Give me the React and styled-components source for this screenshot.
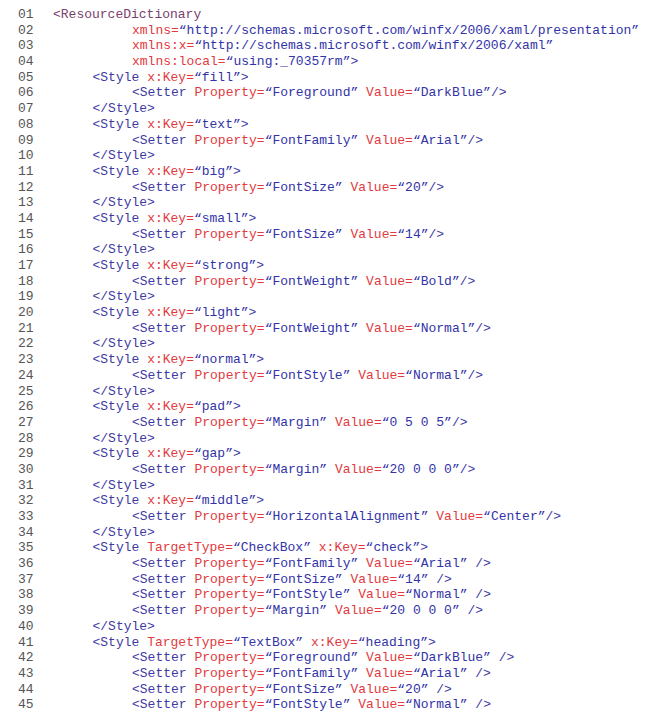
import React from "react";
import styled, { createGlobalStyle } from "styled-components";

const GlobalStyle = createGlobalStyle`
  html, body {
    margin: 0;
    padding: 0;
    background: #fff;
  }
`;

// [indent level, source text]
const lines = [
  [0, "<ResourceDictionary"],
  [2, "xmlns=“http://schemas.microsoft.com/winfx/2006/xaml/presentation”"],
  [2, "xmlns:x=“http://schemas.microsoft.com/winfx/2006/xaml”"],
  [2, "xmlns:local=“using:_70357rm”>"],
  [1, "<Style x:Key=“fill”>"],
  [2, "<Setter Property=“Foreground” Value=“DarkBlue”/>"],
  [1, "</Style>"],
  [1, "<Style x:Key=“text”>"],
  [2, "<Setter Property=“FontFamily” Value=“Arial”/>"],
  [1, "</Style>"],
  [1, "<Style x:Key=“big”>"],
  [2, "<Setter Property=“FontSize” Value=“20”/>"],
  [1, "</Style>"],
  [1, "<Style x:Key=“small”>"],
  [2, "<Setter Property=“FontSize” Value=“14”/>"],
  [1, "</Style>"],
  [1, "<Style x:Key=“strong”>"],
  [2, "<Setter Property=“FontWeight” Value=“Bold”/>"],
  [1, "</Style>"],
  [1, "<Style x:Key=“light”>"],
  [2, "<Setter Property=“FontWeight” Value=“Normal”/>"],
  [1, "</Style>"],
  [1, "<Style x:Key=“normal”>"],
  [2, "<Setter Property=“FontStyle” Value=“Normal”/>"],
  [1, "</Style>"],
  [1, "<Style x:Key=“pad”>"],
  [2, "<Setter Property=“Margin” Value=“0 5 0 5”/>"],
  [1, "</Style>"],
  [1, "<Style x:Key=“gap”>"],
  [2, "<Setter Property=“Margin” Value=“20 0 0 0”/>"],
  [1, "</Style>"],
  [1, "<Style x:Key=“middle”>"],
  [2, "<Setter Property=“HorizontalAlignment” Value=“Center”/>"],
  [1, "</Style>"],
  [1, "<Style TargetType=“CheckBox” x:Key=“check”>"],
  [2, "<Setter Property=“FontFamily” Value=“Arial” />"],
  [2, "<Setter Property=“FontSize” Value=“14” />"],
  [2, "<Setter Property=“FontStyle” Value=“Normal” />"],
  [2, "<Setter Property=“Margin” Value=“20 0 0 0” />"],
  [1, "</Style>"],
  [1, "<Style TargetType=“TextBox” x:Key=“heading”>"],
  [2, "<Setter Property=“Foreground” Value=“DarkBlue” />"],
  [2, "<Setter Property=“FontFamily” Value=“Arial” />"],
  [2, "<Setter Property=“FontSize” Value=“20” />"],
  [2, "<Setter Property=“FontStyle” Value=“Normal” />"],
];

const tokenRe = /(<\/?ResourceDictionary)|(<\/?[A-Za-z]+)|([A-Za-z:]+=)|(“[^”]*”)|(\/?>)|(\s+)/g;

function tokenize(src) {
  const out = [];
  let m;
  tokenRe.lastIndex = 0;
  while ((m = tokenRe.exec(src))) {
    let kind = "plain";
    if (m[1]) kind = "root";
    else if (m[2] || m[5]) kind = "tag";
    else if (m[3]) kind = "attr";
    else if (m[4]) kind = "value";
    out.push({ kind, text: m[0] });
  }
  return out;
}

const App = () => {
  return (
    <Page>
      <GlobalStyle />
      <Listing>
        {lines.map(([indent, src], i) => (
          <Row key={i}>
            <LineNo>{String(i + 1).padStart(2, "0")}</LineNo>
            <Code $indent={indent}>
              {tokenize(src).map((t, j) => (
                <Token key={j} $kind={t.kind}>
                  {t.text}
                </Token>
              ))}
            </Code>
          </Row>
        ))}
      </Listing>
    </Page>
  );
};

export default App;

const colors = {
  root: "#7a3f6e",
  tag: "#3e3aa2",
  attr: "#e23a3e",
  value: "#3333a8",
  plain: "#333",
};

const Page = styled.div`
  width: 666px;
  height: 713px;
  overflow: hidden;
  background: #fff;
  padding-top: 7px;
  box-sizing: border-box;
`;

const Listing = styled.div`
  display: flex;
  flex-direction: column;
  font-family: "Courier New", "Nimbus Mono PS", "FreeMono", "Liberation Mono", monospace;
  font-size: 13px;
  line-height: 15.68px;
`;

const Row = styled.div`
  display: flex;
  white-space: pre;
`;

const LineNo = styled.span`
  width: 53px;
  padding-left: 18px;
  box-sizing: border-box;
  color: #555;
  flex-shrink: 0;
`;

const Code = styled.span`
  padding-left: ${(p) => p.$indent * 39.5}px;
`;

const Token = styled.span`
  color: ${(p) => colors[p.$kind]};
`;
